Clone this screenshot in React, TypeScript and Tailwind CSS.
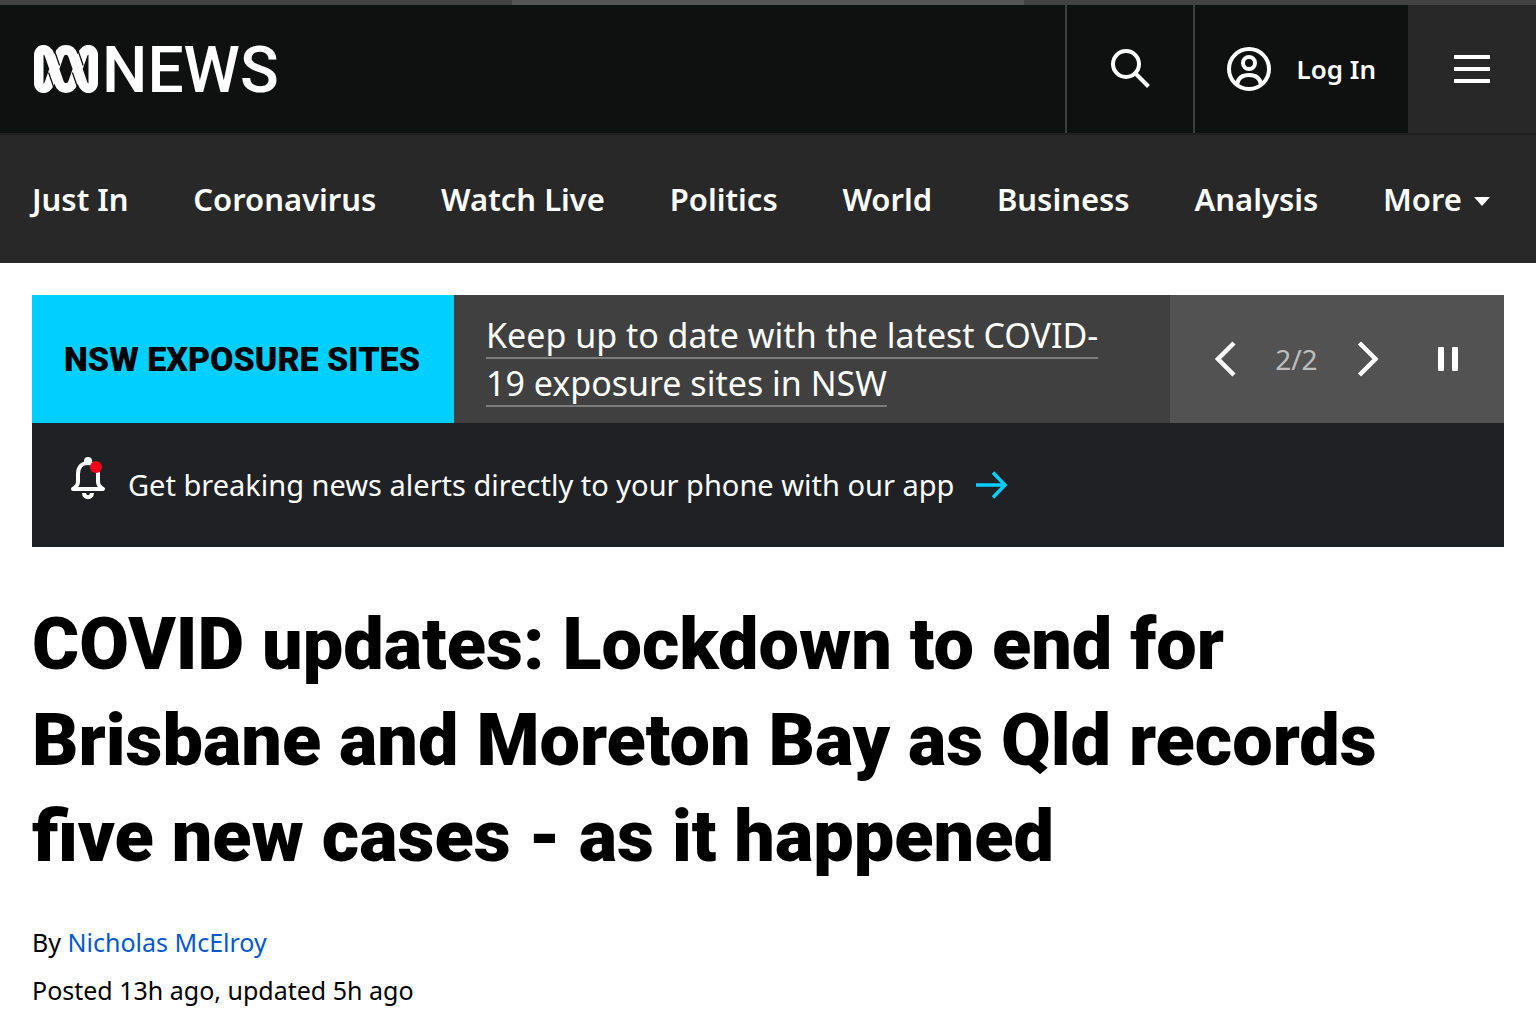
import { useState } from "react";
import clsx from "clsx";

const navLinks = [
  "Just In",
  "Coronavirus",
  "Watch Live",
  "Politics",
  "World",
  "Business",
  "Analysis",
];

function AbcSymbol() {
  return (
    <svg viewBox="0 0 64 48" className="h-12 w-16" fill="none" aria-hidden="true">
      <path
        d="M4.7 37.5V10.5C4.7 3 13 2.8 15.3 9.5L25 37.5C27.5 45 36.5 45 39 37.5L48.7 9.5C51 2.8 59.3 3 59.3 10.5V37.5C59.3 45 51 45.2 48.7 38.5L39 10.5C36.5 3 27.5 3 25 10.5L15.3 38.5C13 45.2 4.7 45 4.7 37.5Z"
        stroke="white"
        strokeWidth="9.6"
      />
      {/* the falling strands pass over the rising ones */}
      <path
        d="M20.6 6L25.6 20.5M14.6 27.5L19.8 42.5M44.2 6L49.2 20.5M38.4 27.5L43.6 42.5"
        stroke="#0f1110"
        strokeWidth="1.3"
      />
    </svg>
  );
}

function Header() {
  return (
    <header className="flex h-32 bg-[#0f1110] text-white">
      <a href="#home" className="flex flex-1 items-center gap-1 pl-[34px]" aria-label="ABC News home">
        <AbcSymbol />
        <span className="pt-1 font-[Roboto] text-[64px] leading-none font-medium">NEWS</span>
      </a>
      <button type="button" aria-label="Search" className="flex w-32 items-center justify-center border-l-2 border-[#3d3e3e]">
        <svg viewBox="0 0 40 40" className="size-10" fill="none" stroke="currentColor" strokeWidth="4" aria-hidden="true">
          <circle cx="16" cy="15" r="13" />
          <path d="M25 24L38.5 37.5" />
        </svg>
      </button>
      <button type="button" className="flex items-center gap-[26px] border-l-2 border-[#3d3e3e] px-8 text-[26px] font-semibold">
        <svg viewBox="0 0 44 44" className="size-11" fill="none" stroke="currentColor" strokeWidth="4" aria-hidden="true">
          <circle cx="22" cy="22" r="20" />
          <circle cx="22" cy="16" r="6" />
          <path d="M10 37.5C11 30.5 15.5 28 22 28C28.5 28 33 30.5 34 37.5" />
        </svg>
        Log In
      </button>
      <button type="button" aria-label="Menu" className="flex w-32 items-center justify-center bg-[#282828]">
        <svg viewBox="0 0 36 28" className="h-7 w-9" fill="currentColor" aria-hidden="true">
          <path d="M0 0H36V4H0ZM0 12H36V16H0ZM0 24H36V28H0Z" />
        </svg>
      </button>
    </header>
  );
}

function Nav() {
  return (
    <nav className="flex h-[130px] items-center justify-between border-t-2 border-[#202020] bg-[#282828] pr-[46px] pl-8 text-[31px] font-semibold text-white">
      {navLinks.map((label) => (
        <a key={label} href={`#${label.toLowerCase().replace(" ", "-")}`}>
          {label}
        </a>
      ))}
      <button type="button" className="flex items-center gap-3">
        More
        <svg viewBox="0 0 16 9" className="mt-1 h-[9px] w-4" fill="currentColor" aria-hidden="true">
          <path d="M0 0H16L8 9Z" />
        </svg>
      </button>
    </nav>
  );
}

function Ticker() {
  const [paused, setPaused] = useState(false);

  return (
    <section className="flex min-h-32 bg-[#404040] text-white" aria-label="Top news">
      <h2 className="flex w-[422px] items-center bg-[#00cfff] px-8 font-[Roboto] text-[34px] font-black whitespace-nowrap text-black">
        NSW EXPOSURE SITES
      </h2>
      <p className="flex-1 py-4 pr-16 pl-8 text-[34px] leading-12">
        <a href="#exposure-sites" className="underline decoration-[#7d7d7d] decoration-2 underline-offset-[9px]">
          Keep up to date with the latest COVID-19 exposure sites in NSW
        </a>
      </p>
      <div className="flex w-[334px] items-center justify-between bg-[#525252] pr-[46px] pl-11">
        <button type="button" aria-label="Previous">
          <svg viewBox="0 0 22 36" className="h-9 w-[22px]" fill="none" stroke="currentColor" strokeWidth="4.5" aria-hidden="true">
            <path d="M20 2L4 18L20 34" />
          </svg>
        </button>
        <span className="text-[28px] text-[#bdbdbd]">2/2</span>
        <button type="button" aria-label="Next">
          <svg viewBox="0 0 22 36" className="h-9 w-[22px]" fill="none" stroke="currentColor" strokeWidth="4.5" aria-hidden="true">
            <path d="M2.5 2L18.5 18L2.5 34" />
          </svg>
        </button>
        <button
          type="button"
          aria-label="Pause"
          aria-pressed={paused}
          onClick={() => setPaused(!paused)}
          className={clsx("pl-5", paused && "opacity-60")}
        >
          <svg viewBox="0 0 20 24" className="h-6 w-5" fill="currentColor" aria-hidden="true">
            <rect width="6" height="24" rx="1" />
            <rect x="14" width="6" height="24" rx="1" />
          </svg>
        </button>
      </div>
    </section>
  );
}

function AppBanner() {
  return (
    <a href="#app" className="flex h-[124px] items-center bg-[#202125] px-[38px] text-[29px] text-white">
      <svg viewBox="0 0 36 44" className="mr-[22px] mb-3.5 h-11 w-9" fill="none" aria-hidden="true">
        <circle cx="18" cy="5" r="4" fill="white" />
        <path
          d="M8 18C8 11 12 7 18 7S28 11 28 18V26C28 29 30 31 33 33H3C6 31 8 29 8 26Z"
          stroke="white"
          strokeWidth="4"
          strokeLinejoin="round"
        />
        <path d="M14 37C14 42.5 22 42.5 22 37" stroke="white" strokeWidth="4" />
        <circle cx="26" cy="11" r="6" fill="#f50019" />
      </svg>
      Get breaking news alerts directly to your phone with our app
      <svg viewBox="0 0 32 28" className="ml-[22px] h-7 w-8" fill="none" stroke="#00cfff" strokeWidth="3.5" aria-hidden="true">
        <path d="M0 14H29M17 1.5L29 14L17 26.5" />
      </svg>
    </a>
  );
}

export default function App() {
  return (
    <div className="min-h-screen bg-white font-['Noto_Sans',sans-serif] text-black">
      <div className="grid h-[5px] grid-cols-3 bg-[#414241]">
        <div className="col-start-2 bg-[#555655]" />
      </div>
      <Header />
      <Nav />
      <main className="px-8 pt-8">
        <Ticker />
        <AppBanner />
        <article>
          <h1 className="mt-[50px] font-[Roboto] text-[72px] leading-[96px] font-black">
            COVID updates: Lockdown to end for Brisbane and Moreton Bay as Qld records five new cases - as it happened
          </h1>
          <div className="mt-[33px] text-[25px] leading-12">
            <p>
              By{" "}
              <a href="#author" className="text-[#0058cc]">
                Nicholas McElroy
              </a>
            </p>
            <p>Posted 13h ago, updated 5h ago</p>
          </div>
        </article>
      </main>
    </div>
  );
}
